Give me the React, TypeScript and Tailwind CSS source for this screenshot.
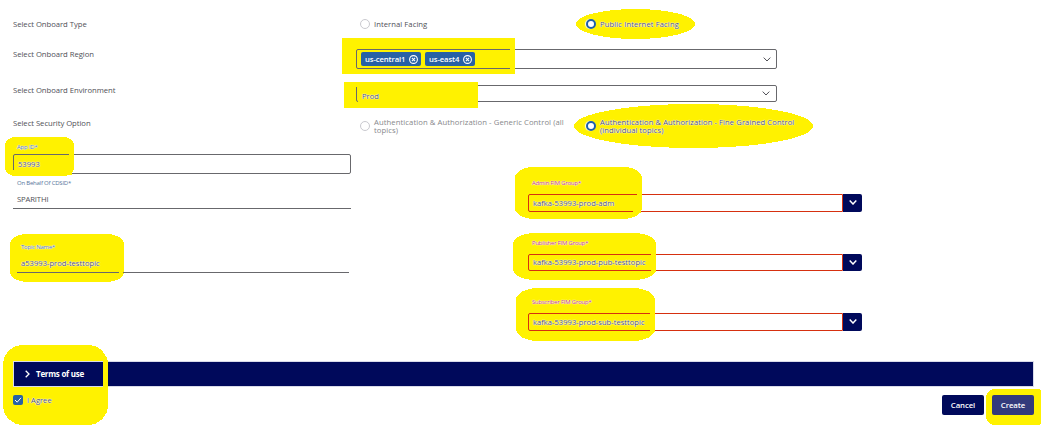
import React from "react";

function Chevron({ className = "" }: { className?: string }) {
  return (
    <svg viewBox="0 0 8 5" className={"h-[5px] w-2 " + className} fill="none" stroke="currentColor">
      <path d="M0.7 0.6 L4 4 L7.3 0.6" />
    </svg>
  );
}

function Radio({ selected }: { selected?: boolean }) {
  return (
    <span
      className={
        selected
          ? "h-[10px] w-[10px] shrink-0 rounded-full border-2 border-[#1f5fa8] bg-white shadow-[-1px_0_1px_0_#fff]"
          : "h-[10px] w-[10px] shrink-0 rounded-full border border-[#c9c9cf] bg-white"
      }
    />
  );
}

function Chip({ label, width }: { label: string; width: string }) {
  return (
    <span className={"flex h-[14px] items-center justify-between rounded-[2px] bg-[#2861a5] pr-[3px] pl-1 text-white " + width}>
      <span className="text-[7.7px] font-semibold tracking-[-0.12px]">{label}</span>
      <svg viewBox="0 0 9 9" className="h-[9px] w-[9px]" fill="none" stroke="white" strokeWidth="1.1">
        <circle cx="4.5" cy="4.5" r="3.9" />
        <path d="M2.9 2.9 L6.1 6.1 M6.1 2.9 L2.9 6.1" />
      </svg>
    </span>
  );
}

const halo = "[text-shadow:0_0_1px_#fff,0_0_1px_#fff,0_0_1px_#fff,0_0_1px_#fff]";

function GroupField({ label, value, box }: { label: string; value: string; box: string }) {
  return (
    <div className="w-[334px]">
      <div className={"h-[15px] pl-1 text-[6px] leading-[8px] tracking-[-0.22px] text-[#c4375c] " + halo}>{label}</div>
      <div className={"flex " + box}>
        <div className={"flex flex-1 items-center rounded-l-[2px] border border-[#d6300f] pb-px pl-1 tracking-[-0.03px] " + halo}>{value}</div>
        <button className="flex w-[19px] items-center justify-center rounded-r-[2px] bg-[#00095b] pb-px text-white">
          <Chevron className="[stroke-width:1.5]" />
        </button>
      </div>
    </div>
  );
}

function Highlights() {
  return (
    <svg className="absolute inset-0 -z-10" width="1041" height="431" fill="#fff200" shapeRendering="crispEdges">
      <ellipse cx="635.5" cy="24" rx="59.5" ry="15" />
      <rect x="342" y="38" width="173" height="36" />
      <rect x="344" y="82" width="134" height="26" />
      <ellipse cx="693.5" cy="126" rx="119.5" ry="22" />
      <rect x="5" y="137" width="69" height="39" rx="11" ry="8" />
      <rect x="10" y="234" width="114" height="48" rx="18" ry="10" />
      <rect x="515" y="167" width="127" height="52" rx="19" ry="11" />
      <rect x="513" y="233" width="143" height="47" rx="22" ry="11" />
      <rect x="516" y="288" width="139" height="53" rx="22" ry="12" />
      <rect x="3" y="345" width="105" height="80" rx="20" />
      <rect x="986" y="389" width="60" height="36" rx="9" />
    </svg>
  );
}

function HighlightEdges() {
  return (
    <svg className="pointer-events-none absolute inset-0" width="1041" height="431" fill="#fff200" shapeRendering="crispEdges">
      <rect x="510" y="48" width="5" height="22" />
      <rect x="356" y="84" width="122" height="3" />
      <rect x="358" y="101" width="120" height="2" />
      <rect x="69" y="153" width="5" height="3" />
      <rect x="13" y="170" width="59" height="5" />
      <rect x="119" y="270" width="4" height="4" />
      <rect x="637" y="193" width="5" height="3" />
      <rect x="633" y="210" width="8" height="3" />
      <rect x="651" y="253" width="5" height="19" />
      <rect x="650" y="312" width="5" height="20" />
      <rect x="103" y="360" width="5" height="27" />
    </svg>
  );
}

export default function App() {
  return (
    <div className="relative isolate h-[431px] w-[1041px] overflow-hidden bg-white pt-[15px] font-['Open_Sans',sans-serif] text-[7.7px] leading-[8px] tracking-[-0.04px] text-[#505057]">
      <Highlights />
      <div className="flex h-[34px] pl-[13px]">
        <div className="w-[347px] pt-[5px]">Select Onboard Type</div>
        <div className="flex h-[18px] w-[226px] items-center gap-1 tracking-[0.04px]">
          <Radio /> Internal Facing
        </div>
        <div className={"flex h-[18px] items-center gap-1 tracking-[0.08px] " + halo}>
          <Radio selected /> Public Internet Facing
        </div>
      </div>
      <div className="flex h-9 pl-[13px]">
        <div className="w-[343px] pt-[1px]">Select Onboard Region</div>
        <div className="flex h-5 w-[421px] items-center gap-1 rounded-[2px] border border-[#68686c] pr-[5px] pl-1">
          <Chip label="us-central1" width="w-[60px]" />
          <Chip label="us-east4" width="w-[50px]" />
          <Chevron className="ml-auto" />
        </div>
      </div>
      <div className="flex h-[33px] pl-[13px]">
        <div className="w-[343px] pt-[1px]">Select Onboard Environment</div>
        <div className="flex h-[17px] w-[421px] items-center justify-between rounded-[2px] border border-[#68686c] pr-[6px] pl-[5px]">
          <span className={"pt-[5px] " + halo}>Prod</span>
          <Chevron className="mb-px" />
        </div>
      </div>
      <div className="flex h-[25px] pl-[13px]">
        <div className="w-[347px] pt-[1px]">Select Security Option</div>
        <div className="flex h-4 w-[226px] items-center gap-1 tracking-[0.07px] text-[#88888c]">
          <Radio />
          <span>Authentication &amp; Authorization - Generic Control (all<br />topics)</span>
        </div>
        <div className={"flex h-4 items-center gap-1 tracking-[0.05px] " + halo}>
          <Radio selected />
          <span>Authentication &amp; Authorization - Fine Grained Control<br />(individual topics)</span>
        </div>
      </div>
      <div className="flex h-[218px] pl-[13px]">
        <div className="w-[515px]">
          <div className={"h-[11px] pl-1 text-[6px] tracking-[-0.2px] text-[#55749b] " + halo}>App ID*</div>
          <div className={"flex h-5 w-[338px] items-center rounded-[2px] border border-[#68686c] pl-1 " + halo}>53993</div>
          <div className="mt-[5px] h-4 pl-1 text-[6px] tracking-[-0.22px] text-[#55749b]">On Behalf Of CDSID*</div>
          <div className="h-[14px] w-[338px] border-b border-[#68686c] pl-1 tracking-[-0.15px]">SPARITHI</div>
          <div className={"mt-[34px] ml-1 h-4 pl-1 text-[6px] tracking-[-0.22px] text-[#55749b] " + halo}>Topic Name*</div>
          <div className={"ml-1 h-[14px] w-[332px] border-b border-[#68686c] pl-1 " + halo}>a53993-prod-testtopic</div>
        </div>
        <div className="pt-9">
          <GroupField label="Admin FIM Group*" value="kafka-53993-prod-adm" box="h-[18px]" />
          <div className="h-[27px]" />
          <GroupField label="Publisher FIM Group*" value="kafka-53993-prod-pub-testtopic" box="h-[17px]" />
          <div className="h-[27px]" />
          <GroupField label="Subscriber FIM Group*" value="kafka-53993-prod-sub-testtopic" box="h-[18px]" />
        </div>
      </div>
      <div className="ml-[13px] flex h-[26px] w-[1021px] items-center gap-[6px] border border-[#d9dbe9] bg-[#00095b] pl-[11px] text-[8px] font-bold tracking-[-0.25px] text-white">
        <svg viewBox="0 0 5 8" className="h-2 w-[5px]" fill="none" stroke="white" strokeWidth="1.3">
          <path d="M0.7 0.7 L4 4 L0.7 7.3" />
        </svg>
        Terms of use
      </div>
      <div className="mr-[7px] ml-[13px] flex items-start justify-between pt-2">
        <div className={"flex items-center gap-1 " + halo}>
          <span className="flex h-[10px] w-[10px] items-center justify-center rounded-[2px] bg-[#2861a5]">
            <svg viewBox="0 0 8 8" className="h-2 w-2" fill="none" stroke="white">
              <path d="M1 4 L3.2 6.2 L7 1.8" />
            </svg>
          </span>
          I Agree
        </div>
        <div className="flex gap-2 text-[7.8px] font-semibold tracking-[-0.1px] text-white">
          <button className="h-5 w-[42px] rounded-[2px] bg-[#00095b]">Cancel</button>
          <button className="h-5 w-[42px] rounded-[2px] bg-[#333a7c]">Create</button>
        </div>
      </div>
      <HighlightEdges />
    </div>
  );
}
